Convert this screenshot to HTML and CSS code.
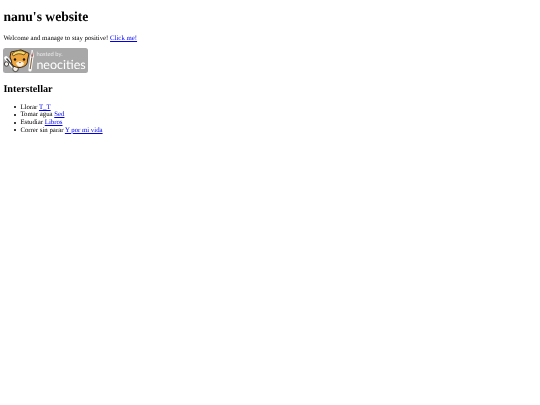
FILE: index.html
```html
<!DOCTYPE html>
<html lang="en">
<head>
    <meta charset="UTF-8">
    <title>nanu's website</title>
    <link rel="stylesheet" href="styles.css">
</head>
<body>
    <h1>nanu's website</h1>
    <p class="intro">Welcome and manage to stay positive! <a href="#">Click me!</a></p>
    <div class="badge">
        <svg class="cat" viewBox="0 0 32 25" width="32" height="25">
            <!-- brush -->
            <path d="M27 22 L29 8" stroke="#fff" stroke-width="3.2" stroke-linecap="round"/>
            <path d="M27.2 21 L28.9 9" stroke="#8a6a48" stroke-width="1.2"/>
            <path d="M27.6 9 L29.2 2 L30.6 9 Z" fill="#8c3f3a" stroke="#fff" stroke-width=".8"/>
            <!-- spanner -->
            <path d="M3 10 L12 21" stroke="#fff" stroke-width="3.6" stroke-linecap="round"/>
            <path d="M3.5 10.5 L12 20.5" stroke="#444" stroke-width="1.4"/>
            <circle cx="12.5" cy="20.8" r="2.8" fill="#f4f0e8" stroke="#222" stroke-width=".8"/>
            <circle cx="3.5" cy="16" r="2.2" fill="#f4f0e8" stroke="#222" stroke-width=".8"/>
            <!-- head -->
            <path d="M7 9 L8 4 L13 3 Q18 0.5 22 3.5 L26 5.5 L24.5 12 Q25 18.5 17 19.5 Q8 19.5 8.5 13 Z" fill="#eda63e" stroke="#3a2616" stroke-width="1"/>
            <path d="M9 6 Q15 0 23 4.5 L21 7 Q15 4 10.5 8 Z" fill="#f5d76a" stroke="#3a2616" stroke-width=".7"/>
            <path d="M13 15 Q17 11.5 21 15 Q20 18.8 17 18.8 Q14 18.8 13 15 Z" fill="#fff1dc"/>
            <circle cx="12" cy="11.5" r="1.2" fill="#1e140c"/>
            <circle cx="21" cy="11.5" r="1.2" fill="#1e140c"/>
            <path d="M15.8 14 L18 14 L17 15.2 Z" fill="#7a3a2a"/>
        </svg>
        <div class="badge-text">
            <span class="hosted">hosted by.</span>
            <span class="neo">neocities</span>
        </div>
    </div>
    <h2>Interstellar</h2>
    <ul>
        <li>Llorar <a href="#">T_T</a></li>
        <li>Tomar agua <a href="#">Sed</a></li>
        <li>Estudiar <a href="#">Libros</a></li>
        <li>Correr sin parar <a href="#">Y por mi vida</a></li>
    </ul>
</body>
</html>
```

FILE: styles.css
```css
* {
    box-sizing: border-box;
}

body {
    margin: 0;
    padding: 0 3.4px;
    min-height: 405px;
    background-color: white;
    color: black;
    font-family: "Liberation Serif", serif;
    font-size: 6.8px;
    line-height: 7.65px;
    text-rendering: geometricPrecision;
    filter: blur(0.2px);
}

h1 {
    margin: 0 0 10.5px;
    padding-top: 9px;
    font-size: 13.6px;
    line-height: 15px;
}

.intro {
    margin: 0 0 5.5px;
}

.badge {
    display: flex;
    width: 85px;
    height: 25px;
    background-color: #a8a8a8;
    border-radius: 2.5px;
}

.cat {
    flex: none;
}

.badge-text {
    display: flex;
    flex-direction: column;
    color: white;
    font-family: Lato, sans-serif;
    margin-left: 1px;
    padding-top: 3px;
}

.hosted {
    font-size: 5.8px;
    line-height: 7px;
    opacity: 0.75;
}

.neo {
    font-size: 12.5px;
    line-height: 13px;
}

h2 {
    margin: 11px 0 8px;
    font-size: 10.2px;
    line-height: 12px;
}

ul {
    margin: 0;
    padding-left: 17px;
    list-style: none;
}

li::before {
    content: "";
    display: inline-block;
    width: 2px;
    height: 2px;
    margin: 0 4px 0.4px -6px;
    border-radius: 50%;
    background-color: black;
}
```
